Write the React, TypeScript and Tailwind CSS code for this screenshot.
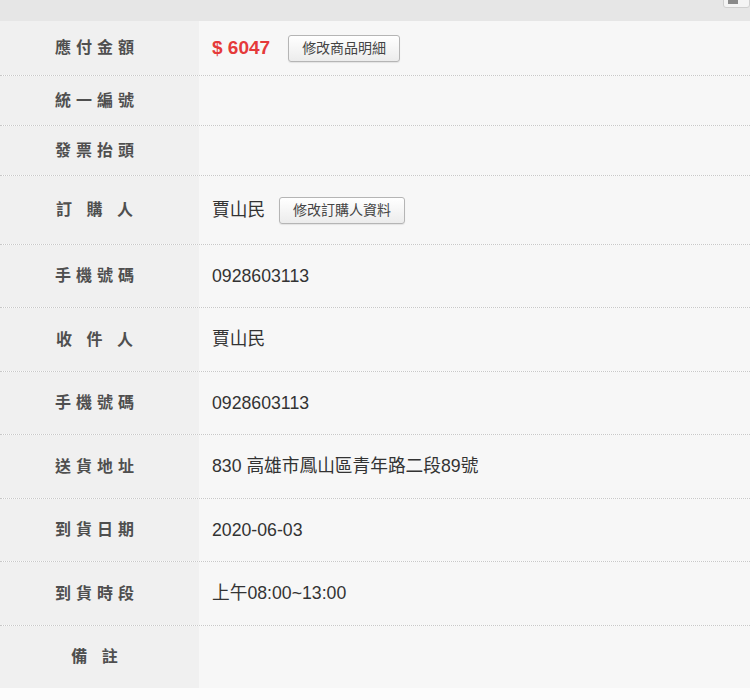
const font = { fontFamily: '"Liberation Sans", "Noto Sans CJK TC", sans-serif' };

type Row = {
  label: string;
  height: string;
  value?: React.ReactNode;
};

function EditButton({ children }: { children: React.ReactNode }) {
  return (
    <button className="h-[27px] px-[13px] rounded-[3px] border border-[#b5b5b5] bg-gradient-to-b from-white to-[#ececec] text-[14px] text-[#444] shadow-[0_1px_1px_rgba(0,0,0,0.08)]">
      {children}
    </button>
  );
}

const rows: Row[] = [
  {
    label: '應付金額',
    height: 'h-[55px]',
    value: (
      <div className="flex items-center gap-[18px]">
        <span className="text-[19px] font-bold text-[#e53a3a]">$ 6047</span>
        <EditButton>修改商品明細</EditButton>
      </div>
    ),
  },
  { label: '統一編號', height: 'h-[50px]' },
  { label: '發票抬頭', height: 'h-[50px]' },
  {
    label: '訂 購 人',
    height: 'h-[69px]',
    value: (
      <div className="flex items-center gap-[14px]">
        <span>賈山民</span>
        <EditButton>修改訂購人資料</EditButton>
      </div>
    ),
  },
  { label: '手機號碼', height: 'h-[63px]', value: '0928603113' },
  { label: '收 件 人', height: 'h-[64px]', value: '賈山民' },
  { label: '手機號碼', height: 'h-[63px]', value: '0928603113' },
  { label: '送貨地址', height: 'h-[64px]', value: '830 高雄市鳳山區青年路二段89號' },
  { label: '到貨日期', height: 'h-[63px]', value: '2020-06-03' },
  { label: '到貨時段', height: 'h-[64px]', value: '上午08:00~13:00' },
  { label: '備 註', height: 'h-[62px]' },
];

export default function App() {
  return (
    <div className="w-[750px] h-[700px] bg-[#fcfcfc] overflow-hidden" style={font}>
      <div className="relative h-[21px] bg-[#e6e6e6]">
        {/* partly hidden toolbar button */}
        <div className="absolute right-0 -top-[6px] w-[27px] h-[14px] rounded-[3px] border border-[#cfcfcf] bg-[#f4f4f4]">
          <div className="ml-[4px] mt-[5px] w-[10px] h-[4px] bg-[#8a8a8a]" />
        </div>
      </div>
      {rows.map((row, i) => (
        <div
          key={i}
          className={`flex ${row.height} ${i < rows.length - 1 ? 'border-b border-dotted border-[#c8c8c8]' : ''}`}
        >
          <div className="w-[199px] shrink-0 bg-[#f0f0f0] flex items-center justify-center pr-[5px]">
            <span className="text-[16px] font-bold text-[#4f4f4f] tracking-[5px] whitespace-pre">{row.label}</span>
          </div>
          <div className="flex-1 bg-[#f7f7f7] flex items-center pl-[13px] text-[17.7px] text-[#333]">
            {row.value}
          </div>
        </div>
      ))}
    </div>
  );
}
